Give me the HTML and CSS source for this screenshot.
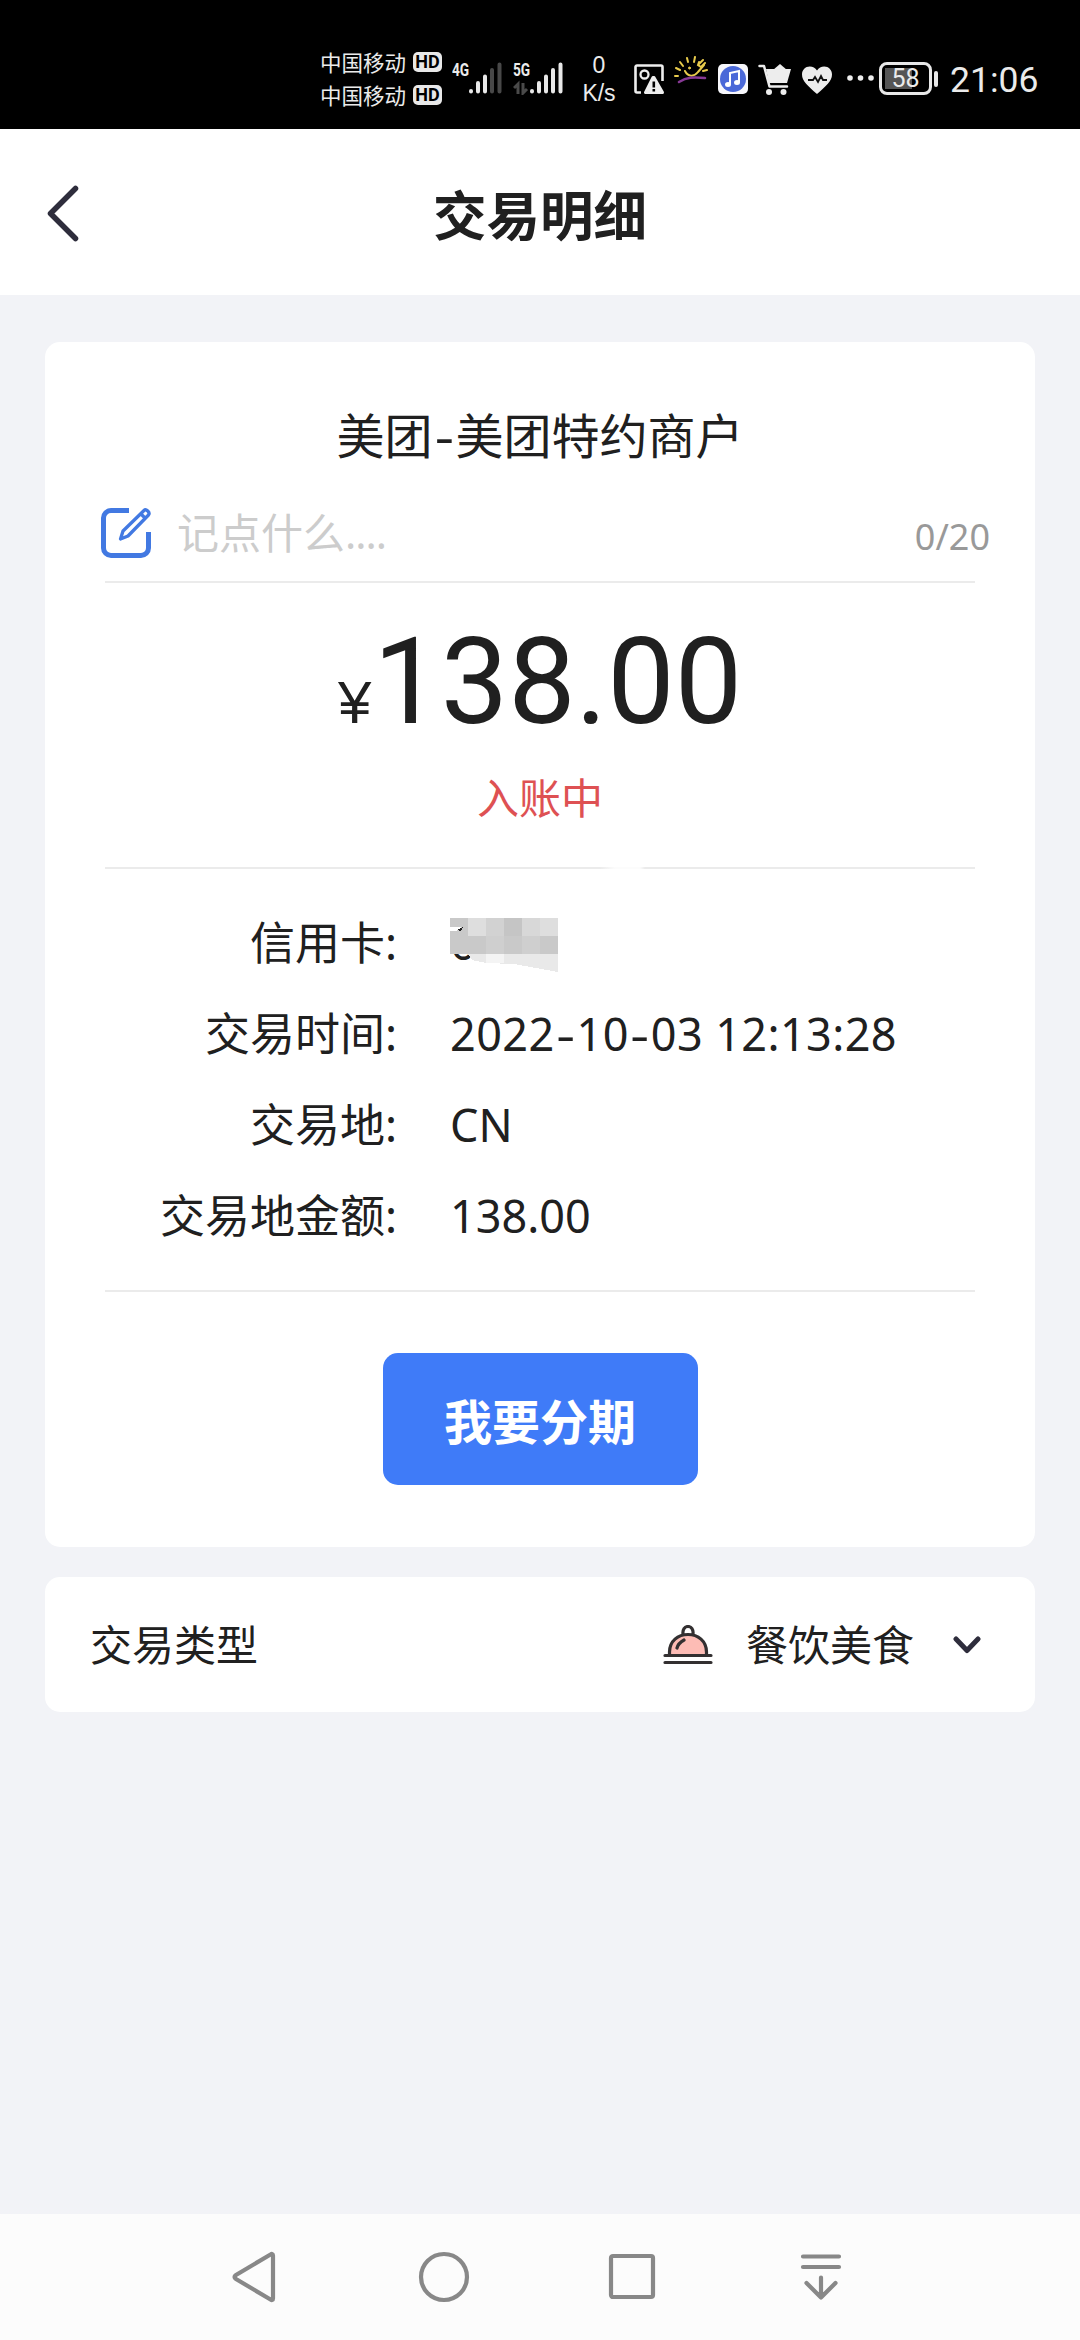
FILE: index.html
```html
<!DOCTYPE html>
<html lang="zh-CN">
<head>
<meta charset="utf-8">
<title>交易明细</title>
<link rel="stylesheet" href="styles.css">
</head>
<body>
<div class="screen">
  <div class="status">
    <div class="carriers">
      <div class="carrier"><span>中国移动</span><span class="hd">HD</span></div>
      <div class="carrier"><span>中国移动</span><span class="hd">HD</span></div>
    </div>
    <div class="signal signal-4g">
      <span class="gen">4G</span>
      <svg width="52" height="34" viewBox="0 0 52 34" fill="none" stroke-width="4" stroke-linecap="round"><path stroke="#e8e8e8" d="M19 30.500v-.5M26 30.500v-8.500M33 30.500v-15"/><path stroke="#484848" d="M40 30.500v-21.500M47.500 30.500v-27"/></svg>
    </div>
    <div class="signal signal-5g">
      <span class="gen">5G</span>
      <svg width="52" height="34" viewBox="0 0 52 34" fill="none" stroke-width="4" stroke-linecap="round"><path stroke="#e8e8e8" d="M19 30.500v-.5M26 30.500v-8.500M33 30.500v-15M40 30.500v-21.500M47.500 30.500v-27"/><path stroke="#4a4a4a" stroke-width="3" stroke-linecap="butt" d="M5 33v-10l-4 4M10 22v10l4-4"/></svg>
    </div>
    <div class="speed"><span>0</span><span>K/s</span></div>
    <svg class="i-photo" width="30" height="30" viewBox="0 0 30 30"><path fill="none" stroke="#eee" stroke-width="2.600" d="M7 28.500H3a1.500 1.500 0 0 1-1.500-1.500V3A1.500 1.500 0 0 1 3 1.500h24A1.500 1.500 0 0 1 28.500 3v14"/><circle cx="10.500" cy="10.500" r="4" fill="none" stroke="#eee" stroke-width="2.300"/><path fill="#eee" d="M19.500 12c1 0 1.700.5 2.200 1.400l8 14c.7 1.300 0 2.600-1.600 2.600H12c-1.700 0-2.500-1.300-1.700-2.600l7-14c.5-.9 1.200-1.400 2.200-1.400z"/><path stroke="#000" stroke-width="2.600" d="M19.800 17.500v6M19.800 25v2.600"/></svg>
    <svg class="i-sun" width="34" height="30" viewBox="0 0 34 30" fill="none" stroke="#e8cb4c" stroke-width="2" stroke-linecap="round"><path d="M1 20l3 0M2 12l4 2M6 6l3 4M13 2l1 4M21 1l-1 5M11 15c3 6 9 6 13 1l6-7M25 6l-1 3 3 2 4-4M29 4l-4 4M29 15l4-1"/><circle cx="15.500" cy="12" r="1" fill="#e8cb4c" stroke-width="1"/><path stroke="#873995" stroke-width="2.600" d="M5 26c8-5 14-5 26-4"/></svg>
    <svg class="i-music" width="30" height="30" viewBox="0 0 30 30"><rect width="30" height="30" rx="5" fill="#f7f7fb"/><circle cx="15" cy="15" r="13" fill="#4a68d8"/><path fill="none" stroke="#fff" stroke-width="2" d="M12 20V9l9-2v11"/><ellipse cx="10" cy="20.500" rx="3" ry="2.500" fill="#fff"/><ellipse cx="19" cy="18.500" rx="3" ry="2.500" fill="#fff"/></svg>
    <svg class="i-cart" width="34" height="32" viewBox="0 0 34 32" fill="#ededed"><path d="M15 7l7-6 7 6z"/><path d="M8 6h25l-4 14H11z"/><path fill="none" stroke="#ededed" stroke-width="2.500" stroke-linecap="round" stroke-linejoin="round" d="M1.500 3H6l5.500 20.500H29"/><circle cx="11" cy="29" r="3"/><circle cx="25.500" cy="29" r="3"/></svg>
    <svg class="i-heart" width="30" height="28" viewBox="0 0 30 28"><path fill="#ededed" d="M15 28C6 20 0 15 0 8.500 0 4 3.400.5 7.800.5c3 0 5.500 1.500 7.200 4 1.700-2.500 4.200-4 7.200-4C26.600.5 30 4 30 8.500 30 15 24 20 15 28z"/><path fill="none" stroke="#111" stroke-width="1.800" d="M6 14h5l2-3 3 5 3-6 2 4h4"/></svg>
    <svg class="i-more" width="27" height="6" viewBox="0 0 27 6" fill="#ededed"><circle cx="3" cy="3" r="2.800"/><circle cx="13.500" cy="3" r="2.800"/><circle cx="24" cy="3" r="2.800"/></svg>
    <div class="battery"><span>58</span></div>
    <div class="nub"></div>
    <div class="clock">21:06</div>
  </div>

  <div class="header">
    <svg class="back" width="34" height="58" viewBox="0 0 34 58" fill="none" stroke="#2e2d3c" stroke-width="5.500" stroke-linecap="round" stroke-linejoin="round"><path d="M29.500 4.500L4.500 29.500l25 25"/></svg>
    <h1>交易明细</h1>
  </div>

  <div class="content">
    <div class="card detail">
      <div class="merchant">美团<span class="dash">-</span>美团特约商户</div>
      <div class="note">
        <svg width="52" height="52" viewBox="0 0 52 52" fill="none" stroke="#4279e2" stroke-width="5" stroke-linejoin="round"><path d="M29 3.500H11A7.500 7.500 0 0 0 3.500 11v30A7.500 7.500 0 0 0 11 48.500h30a7.500 7.500 0 0 0 7.500-7.500V25"/><path stroke-width="3.300" d="M20.500 32l2.500-8L44 3.500c2-2 6.500 2 4.500 4.500L28 29zM40.500 6.500l5 5"/></svg>
        <span class="hint">记点什么<span class="dots">....</span></span>
        <span class="count">0/20</span>
      </div>
      <div class="line"></div>
      <div class="amount"><span class="yen">¥</span><span>138.00</span></div>
      <div class="state">入账中</div>
      <div class="line smudged"></div>
      <div class="rows">
        <div class="k">信用卡:</div>
        <div class="v masked">6<svg class="mosaic" width="108" height="54" viewBox="0 0 108 54" shape-rendering="crispEdges"><path fill="#c9c9c9" d="M0 0h18v18H0zM0 18h108v18H0z"/><path fill="#dedede" d="M18 0h18v18H18zM90 0h18v18H90z"/><path fill="#d2d2d2" d="M36 0h18v18H36z"/><path fill="#c5c5c5" d="M54 0h18v18H54z"/><path fill="#d8d8d8" d="M72 0h18v18H72z"/><path fill="#cfcfcf" d="M36 18h18v18H36zM72 18h18v18H72z"/><path fill="#e9e9e9" d="M18 36h90v18L64 46 36 45 22 42z"/><path fill="#f4f4f4" d="M36 36h18v9H36z"/><path fill="#fff" d="M0 9h12l-6 4H0z"/><path fill="#222" d="M7 12l6-3-2 4z"/></svg></div>
        <div class="k">交易时间:</div><div class="v date">2022<i>-</i>10<i>-</i>03 12:13:28</div>
        <div class="k">交易地:</div><div class="v">CN</div>
        <div class="k">交易地金额:</div><div class="v">138.00</div>
      </div>
      <div class="line"></div>
      <button class="primary">我要分期</button>
    </div>

    <div class="card type">
      <span>交易类型</span>
      <svg class="dish" width="50" height="40" viewBox="0 0 50 40" fill="none" stroke="#333031" stroke-width="3.200" stroke-linecap="round"><path fill="#fdbcb5" d="M6.500 30v-3C6.500 16 15 9.500 25 9.500S43.500 16 43.500 27v3"/><path d="M20 9c-.5-4.500 1.500-7.500 5-7.500S30.500 4.500 30 9M2 30.500h46M2 37.500h46M14 23c1-4 3.500-6 7-8"/></svg>
      <span class="kind">餐饮美食</span>
      <svg class="chev" width="28" height="18" viewBox="0 0 28 18" fill="none" stroke="#2e2d3c" stroke-width="5" stroke-linecap="round" stroke-linejoin="round"><path d="M3 3l11 11.500L25 3"/></svg>
    </div>
  </div>

  <div class="nav">
    <svg width="52" height="52" viewBox="0 0 52 52"><path d="M44 4.500v43c0 1.500-1 2-2.500 1L7 28c-2-1.500-2-2.500 0-4L41.500 3.500c1.500-1 2.500-.5 2.500 1z"/></svg>
    <svg width="52" height="52" viewBox="0 0 52 52"><circle cx="26" cy="26" r="23"/></svg>
    <svg width="52" height="52" viewBox="0 0 52 52"><rect x="5" y="5" width="42" height="41" rx="2"/></svg>
    <svg width="52" height="52" viewBox="0 0 52 52" stroke-linecap="round" stroke-linejoin="round"><path d="M8 5.500h36M8 16h36M26 26.500V46M11.500 32L26 46.500 40.500 32"/></svg>
  </div>
</div>
</body>
</html>
```
FILE: styles.css
```css
* { box-sizing: border-box; }
body { margin: 0; background: #f2f3f7; color: #202020; font-family: "Noto Sans", "Noto Sans CJK SC", sans-serif; }
svg { display: block; flex: none; }
.screen { width: 1080px; height: 2340px; display: flex; flex-direction: column; overflow: hidden; }

/* system status bar */
.status { height: 129px; flex: none; background: #000; color: #ebebeb; display: flex; align-items: flex-start; padding-left: 320px; }
.carriers { width: 122px; margin-top: 45px; font-family: "Noto Sans CJK SC", sans-serif; }
.carrier { height: 33px; display: flex; align-items: center; justify-content: space-between; font-size: 21.500px; line-height: 33px; white-space: nowrap; }
.hd { width: 29px; height: 20px; border-radius: 5px; background: #e8e8e8; color: #000; font: bold 18px/20px Roboto, sans-serif; text-align: center; }
.signal { position: relative; width: 52px; height: 34px; margin-top: 61px; }
.signal-4g { margin-left: 10px; }
.signal-5g { margin-left: 9px; }
.gen { position: absolute; left: 0; top: 0; font: bold 18px/18px Roboto, sans-serif; transform: scaleX(.76); transform-origin: left; }
.speed { width: 40px; margin: 51px 0 0 14px; display: flex; flex-direction: column; align-items: center; font: 23px/28px "Liberation Sans", sans-serif; }
.i-photo { margin: 64px 0 0 15px; }
.i-sun { margin: 56px 0 0 10px; }
.i-music { margin: 64px 0 0 10px; }
.i-cart { margin: 63px 0 0 10px; }
.i-heart { margin: 66px 0 0 10px; }
.i-more { margin: 75px 0 0 15px; }
.battery { width: 53px; height: 33px; margin: 62px 0 0 5px; border: 3px solid #e8e8e8; border-radius: 8px; padding: 2px; font: 25px/24px Roboto, sans-serif; text-align: center; background: linear-gradient(90deg, #555 27px, transparent 27px) 3px 3px / 41px 21px no-repeat; }
.nub { width: 4px; height: 16px; border-radius: 2px; background: #e8e8e8; margin: 71px 0 0 2px; }
.clock { margin: 58px 0 0 12px; font: 35.500px/44px Roboto, sans-serif; }

/* page header */
.header { height: 166px; flex: none; background: #fff; display: grid; grid-template-columns: 90px 1fr 90px; align-items: center; }
.back { margin: 2px 0 0 46px; }
h1 { margin: 2px 0 0; text-align: center; font: bold 53.500px/60px "Noto Sans CJK SC", sans-serif; color: #202020; }

.content { flex: 1; padding: 47px 45px 0; }
.card { background: #fff; border-radius: 15px; }
.detail { height: 1205px; padding: 0 60px; display: flex; flex-direction: column; }
.merchant { margin-top: 62px; height: 64px; font-size: 48px; line-height: 64px; text-align: center; }
.dash { display: inline-block; width: 23px; transform: scaleX(1.250); }
.note { height: 60px; margin: 35px -15px 0 -5px; display: flex; align-items: center; }
.hint { margin-left: 25px; color: #ccc; font-size: 42px; line-height: 60px; }
.dots { letter-spacing: -1px; }
.count { margin-left: auto; color: #999; font-size: 36px; line-height: 60px; padding-top: 8px; }
.line { height: 2px; flex: none; background: #ebebeb; }
.note + .line { margin-top: 18px; }
.amount { margin-top: 29px; height: 140px; text-align: center; font: 120px/140px Roboto, "Liberation Sans", sans-serif; }
.yen { font-family: "Liberation Sans", sans-serif; font-size: 60px; margin-right: 2px; }
.state { margin-top: 16px; height: 60px; text-align: center; color: #de5153; font-size: 42px; line-height: 60px; }
.smudged { margin-top: 39px; background: linear-gradient(90deg, #ebebeb 495px, #fcfcfc 510px 535px, #ebebeb 540px); }
.rows { margin-top: 28px; display: grid; grid-template-columns: 292px 1fr; grid-auto-rows: 91px; column-gap: 53px; font-size: 45px; line-height: 91px; }
.k { text-align: right; white-space: nowrap; }
.v { white-space: nowrap; }
.date { letter-spacing: .4px; }
.date i { font-style: normal; display: inline-block; width: 22px; text-align: center; transform: scaleX(1.300); }
.masked { position: relative; }
.mosaic { position: absolute; left: 0; top: 21px; }
.rows + .line { margin-top: 29px; }
.primary { align-self: center; flex: none; width: 315px; height: 132px; margin-top: 61px; border: 0; padding: 0; border-radius: 15px; background: #3f7bf8; color: #fff; font: bold 48px/130px "Noto Sans CJK SC", sans-serif; }

.type { height: 135px; margin-top: 30px; padding: 0 54px 0 45px; display: flex; align-items: center; font-size: 42px; line-height: 60px; }
.dish { margin-left: auto; }
.kind { margin: 0 39px 0 33px; }

/* system navigation */
.nav { height: 126px; flex: none; background: #fcfcfc; display: flex; justify-content: center; gap: 136.500px; padding: 37px 4px 0 0; }
.nav svg { fill: none; stroke: #888; stroke-width: 4.200; }
```
